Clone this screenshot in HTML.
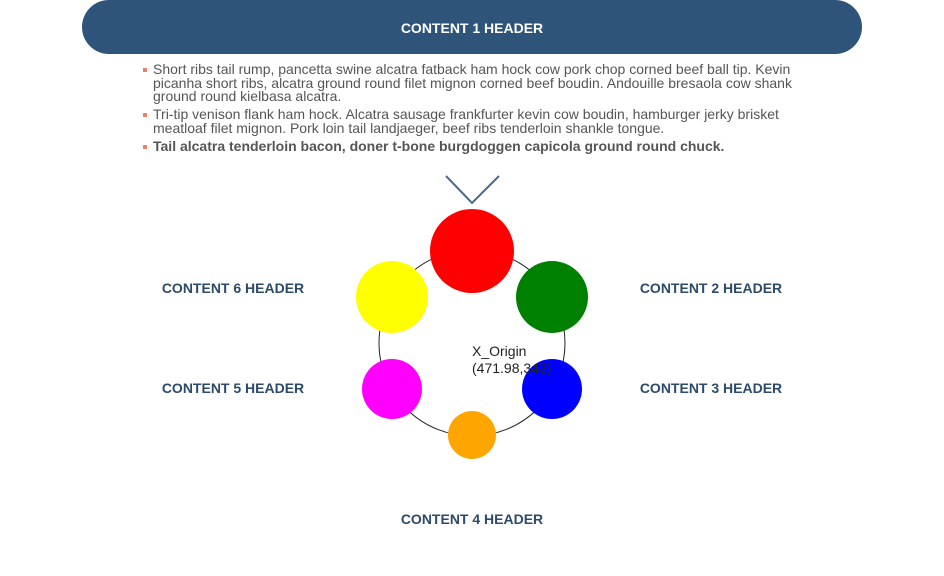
<!DOCTYPE html>
<html><head><style>
body{margin:0;width:944px;height:576px;background:#fff;position:relative;overflow:hidden;font-family:"Liberation Sans",Arial,sans-serif}
.bar{position:absolute;left:82px;top:0;width:780px;height:54px;border-radius:27px;background:#2e5479;color:#fff;font-weight:bold;font-size:14px;line-height:56px;text-align:center}
ul{position:absolute;left:143px;top:63px;width:655px;margin:0;padding:0;list-style:none;font-size:14px;line-height:13.5px;color:#555}
li{position:relative;padding-left:10px;margin-bottom:4.5px}
li:before{content:"";position:absolute;left:0;top:5px;width:4px;height:4px;background:#e8806a}
.lab{position:absolute;font-weight:bold;font-size:14px;color:#2d4a6a;width:200px;text-align:center;margin-left:-100px}
</style></head><body>
<div class="bar">CONTENT 1 HEADER</div>
<ul>
<li>Short ribs tail rump, pancetta swine alcatra fatback ham hock cow pork chop corned beef ball tip. Kevin picanha short ribs, alcatra ground round filet mignon corned beef boudin. Andouille bresaola cow shank ground round kielbasa alcatra.</li>
<li>Tri-tip venison flank ham hock. Alcatra sausage frankfurter kevin cow boudin, hamburger jerky brisket meatloaf filet mignon. Pork loin tail landjaeger, beef ribs tenderloin shankle tongue.</li>
<li style="font-weight:bold">Tail alcatra tenderloin bacon, doner t-bone burgdoggen capicola ground round chuck.</li>
</ul>
<svg style="position:absolute;left:0;top:0" width="944" height="576">
<polyline points="446,176 472,203 499,176" fill="none" stroke="#4a6a8a" stroke-width="2"/>
<circle cx="472" cy="343" r="93" fill="none" stroke="#222" stroke-width="1"/>
<circle cx="472" cy="251" r="42" fill="#f00"/>
<circle cx="392" cy="297" r="36" fill="#ff0"/>
<circle cx="552" cy="297" r="36" fill="#008000"/>
<circle cx="392" cy="389" r="30" fill="#f0f"/>
<circle cx="552" cy="389" r="30" fill="#00f"/>
<circle cx="472" cy="435" r="24" fill="#ffa500"/>
<text x="472" y="356" font-family="Liberation Sans" font-size="14" fill="#222">X_Origin</text>
<text x="472" y="373" font-family="Liberation Sans" font-size="14" fill="#222">(471.98,343)</text>
</svg>
<div class="lab" style="left:233px;top:280px">CONTENT 6 HEADER</div>
<div class="lab" style="left:711px;top:280px">CONTENT 2 HEADER</div>
<div class="lab" style="left:233px;top:380px">CONTENT 5 HEADER</div>
<div class="lab" style="left:711px;top:380px">CONTENT 3 HEADER</div>
<div class="lab" style="left:472px;top:511px">CONTENT 4 HEADER</div>
</body></html>
